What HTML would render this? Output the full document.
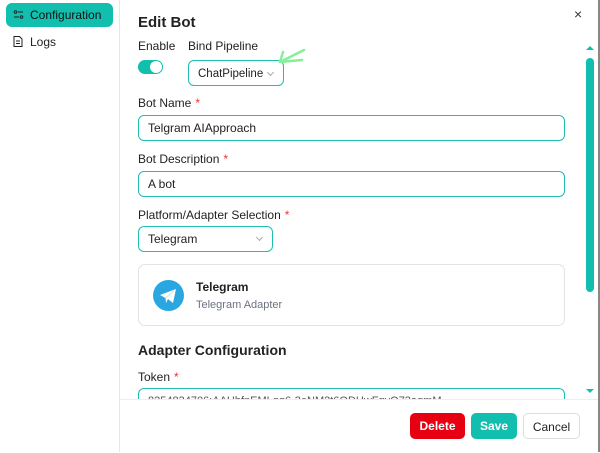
<html><head><style>
body{margin:0;width:600px;height:452px;background:#fff;font-family:"Liberation Sans",sans-serif;color:#222;position:relative;overflow:hidden}
.a{position:absolute}
.lbl{font-size:12px;color:#222}
.req{color:#e33;margin-left:4px}
.inp{border:1px solid #1fbfb0;border-radius:6px;height:25px;box-sizing:border-box;font-size:12px;padding:0 9px;line-height:25px;background:#fff}
.chev{position:absolute;right:10px;top:8px;width:4px;height:4px;border-right:1px solid #aaa;border-bottom:1px solid #aaa;transform:rotate(45deg)}
.btn{position:absolute;top:413px;height:26px;border-radius:5px;font-size:12px;font-weight:bold;text-align:center;line-height:26px;box-sizing:border-box}
</style></head><body>
<div class="a" style="left:119px;top:0;width:1px;height:452px;background:#e6e6e6"></div>
<div class="a" style="left:598px;top:0;width:2px;height:452px;background:#888"></div>
<div class="a" style="left:6px;top:3px;width:107px;height:24px;background:#12bfae;border-radius:6px"></div>
<svg class="a" style="left:13px;top:9px" width="11" height="11" viewBox="0 0 11 11"><circle cx="2.5" cy="3" r="1.3" fill="none" stroke="#222"/><line x1="5" y1="3" x2="10" y2="3" stroke="#222"/><line x1="1" y1="8" x2="6" y2="8" stroke="#222"/><circle cx="8.5" cy="8" r="1.3" fill="none" stroke="#222"/></svg>
<div class="a" style="left:30px;top:8px;font-size:12px;color:#111">Configuration</div>
<svg class="a" style="left:13px;top:36px" width="10" height="11" viewBox="0 0 10 11"><path d="M1 .5h5.5l2.5 2.5v7.5h-8z" fill="none" stroke="#222"/><line x1="3" y1="5" x2="7" y2="5" stroke="#222"/><line x1="3" y1="7.5" x2="7" y2="7.5" stroke="#222"/></svg>
<div class="a" style="left:30px;top:35px;font-size:12px">Logs</div>
<div class="a" style="left:138px;top:14px;font-size:15px;font-weight:bold;color:#222">Edit Bot</div>
<div class="a" style="left:574px;top:6px;font-size:14px;color:#333">×</div>
<div class="a lbl" style="left:138px;top:39px">Enable</div>
<div class="a lbl" style="left:188px;top:39px">Bind Pipeline</div>
<div class="a" style="left:138px;top:60px;width:25px;height:14px;border-radius:7px;background:#12bfae"><div class="a" style="left:12px;top:1px;width:12px;height:12px;border-radius:6px;background:#fff"></div></div>
<div class="a inp" style="left:188px;top:60px;width:96px;height:26px;line-height:26px;padding:0 0 0 9px;font-size:11.5px">ChatPipeline<span class="chev" style="top:9px"></span></div>
<svg class="a" style="left:276px;top:46px" width="32" height="22"><path d="M4 16 L28 4 M4 16 L7 6 M4 16 L26 14" stroke="#86ef9c" stroke-width="2.5" fill="none" stroke-linecap="round"/></svg>
<div class="a lbl" style="left:138px;top:96px">Bot Name<span class="req">*</span></div>
<div class="a inp" style="left:138px;top:115px;width:427px;height:26px">Telgram AIApproach</div>
<div class="a lbl" style="left:138px;top:152px">Bot Description<span class="req">*</span></div>
<div class="a inp" style="left:138px;top:171px;width:427px;height:26px">A bot</div>
<div class="a lbl" style="left:138px;top:208px">Platform/Adapter Selection<span class="req">*</span></div>
<div class="a inp" style="left:138px;top:226px;width:135px;height:26px">Telegram<span class="chev"></span></div>
<div class="a" style="left:138px;top:264px;width:427px;height:62px;border:1px solid #e3e3e3;border-radius:7px;box-sizing:border-box"></div>
<svg class="a" style="left:153px;top:280px" width="31" height="31" viewBox="0 0 31 31"><circle cx="15.5" cy="15.5" r="15.5" fill="#2aa7e0"/><path d="M7 15 L23 9 L20 23 L15 19 L13 23 L12.5 18 Z" fill="#fff"/><path d="M12.5 18 L21 11" stroke="#c8e6f5" stroke-width="1"/></svg>
<div class="a" style="left:196px;top:280px;font-size:12px;font-weight:bold">Telegram</div>
<div class="a" style="left:196px;top:299px;font-size:11px;color:#6b7280">Telegram Adapter</div>
<div class="a" style="left:138px;top:342px;font-size:14px;font-weight:bold;color:#222">Adapter Configuration</div>
<div class="a lbl" style="left:138px;top:370px">Token<span class="req">*</span></div>
<div class="a inp" style="left:138px;top:388px;width:427px;height:26px;color:#555;font-size:11px">8254834706:AAHbfnEMLgg6-3eNM2t6ODHwFgyO73aqmM</div>
<div class="a" style="left:120px;top:399px;width:478px;height:53px;background:#fff;border-top:1px solid #eee"></div>
<div class="a" style="left:586px;top:58px;width:8px;height:234px;background:#12bfae;border-radius:4px"></div>
<div class="a" style="left:586px;top:46px;width:0;height:0;border:4px solid transparent;border-bottom-color:#12bfae;border-top:0"></div>
<div class="a" style="left:586px;top:389px;width:0;height:0;border:4px solid transparent;border-top-color:#12bfae;border-bottom:0"></div>
<div class="btn" style="left:410px;width:55px;background:#e60012;color:#fff">Delete</div>
<div class="btn" style="left:471px;width:46px;background:#12bfae;color:#fff">Save</div>
<div class="btn" style="left:523px;width:57px;border:1px solid #ddd;color:#222;font-weight:normal">Cancel</div>
</body></html>
